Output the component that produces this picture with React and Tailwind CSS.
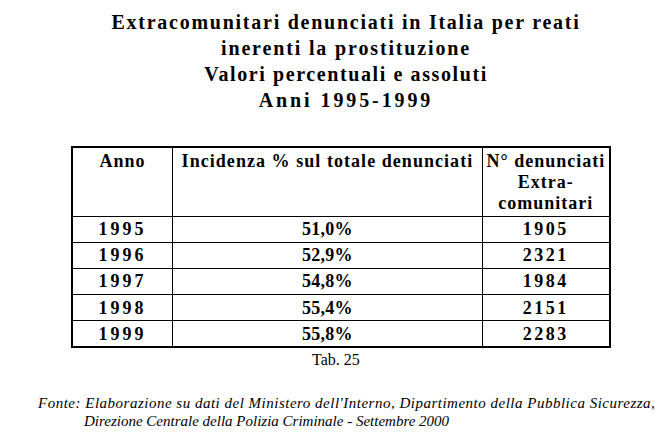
export default function App() {
  const rows = [
    ["1995", "51,0%", "1905"],
    ["1996", "52,9%", "2321"],
    ["1997", "54,8%", "1984"],
    ["1998", "55,4%", "2151"],
    ["1999", "55,8%", "2283"],
  ];
  return (
    <div className="w-[672px] h-[437px] bg-white text-black overflow-hidden" style={{ fontFamily: '"Liberation Serif", "Times New Roman", serif' }}>
      <div className="pt-[9px] pl-[20px] text-center font-bold text-[20px] leading-[26px]">
        <div className="tracking-[1.75px]">Extracomunitari denunciati in Italia per reati</div>
        <div className="tracking-[1.85px]">inerenti la prostituzione</div>
        <div className="tracking-[1.6px]">Valori percentuali e assoluti</div>
        <div className="tracking-[2.9px]">Anni 1995-1999</div>
      </div>
      <div className="ml-[71px] mt-[33px] w-[540px]">
        <table className="w-full border-collapse border-2 border-black font-bold text-[18px]">
          <colgroup>
            <col className="w-[101px]" />
            <col className="w-[311px]" />
            <col className="w-[128px]" />
          </colgroup>
          <thead>
            <tr className="h-[69px]">
              <th className="border border-black align-top text-center font-bold leading-[21px] pt-[3px] tracking-[1px]">Anno</th>
              <th className="border border-black align-top text-center font-bold leading-[21px] pt-[3px] tracking-[1.05px]">Incidenza % sul totale denunciati</th>
              <th className="border border-black align-top text-center font-bold leading-[21px] pt-[3px] tracking-[1px]">
                N° denunciati<br />Extra-<br />comunitari
              </th>
            </tr>
          </thead>
          <tbody>
            {rows.map((r) => (
              <tr key={r[0]} className="h-[26.2px]">
                <td className="border border-black text-center leading-[20px] p-0 tracking-[3px]">{r[0]}</td>
                <td className="border border-black text-center leading-[20px] p-0 tracking-[0.3px]">{r[1]}</td>
                <td className="border border-black text-center leading-[20px] p-0 tracking-[2.5px]">{r[2]}</td>
              </tr>
            ))}
          </tbody>
        </table>
        <div className="mt-[2px] text-center text-[16px] leading-[20px] pr-[10px]">Tab. 25</div>
      </div>
      <div className="mt-[24px] italic text-[15px] leading-[18px]">
        <div className="pl-[38px] whitespace-nowrap tracking-[0.5px]">Fonte: Elaborazione su dati del Ministero dell'Interno, Dipartimento della Pubblica Sicurezza,</div>
        <div className="pl-[84px] whitespace-nowrap">Direzione Centrale della Polizia Criminale  - Settembre 2000</div>
      </div>
    </div>
  );
}
